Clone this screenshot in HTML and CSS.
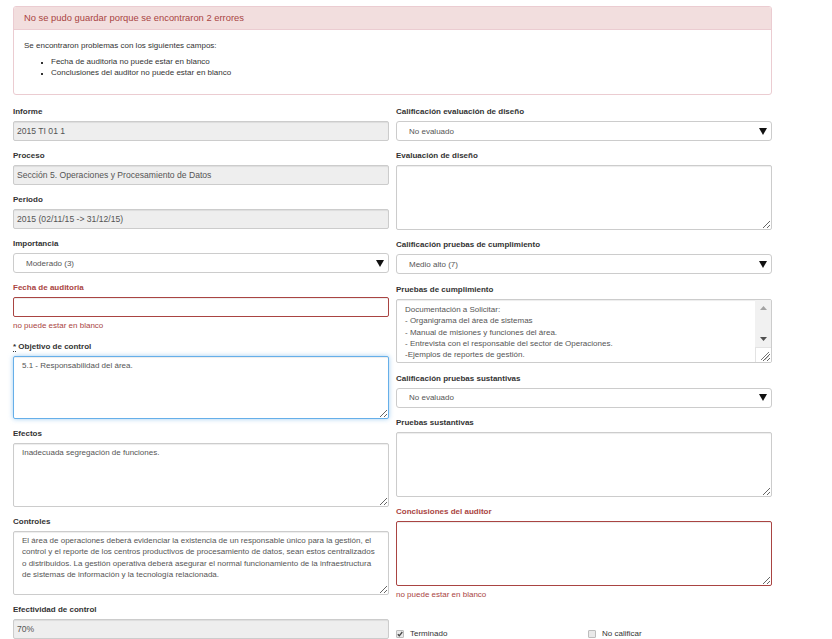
FILE: index.html
```html
<!DOCTYPE html>
<html lang="es">
<head>
<meta charset="utf-8">
<title>Prueba</title>
<link rel="stylesheet" href="styles.css">
</head>
<body>
<div class="page">
  <div class="alert">
    <div class="alert-head">No se pudo guardar porque se encontraron 2 errores</div>
    <div class="alert-body">
      <p>Se encontraron problemas con los siguientes campos:</p>
      <ul>
        <li>Fecha de auditoria no puede estar en blanco</li>
        <li>Conclusiones del auditor no puede estar en blanco</li>
      </ul>
    </div>
  </div>

  <div class="form">
    <div class="col col-l">
      <div class="group">
        <label class="lbl">Informe</label>
        <div class="input disabled">2015 TI 01 1</div>
      </div>
      <div class="group">
        <label class="lbl">Proceso</label>
        <div class="input disabled">Sección 5. Operaciones y Procesamiento de Datos</div>
      </div>
      <div class="group">
        <label class="lbl">Periodo</label>
        <div class="input disabled">2015 (02/11/15 -&gt; 31/12/15)</div>
      </div>
      <div class="group">
        <label class="lbl">Importancia</label>
        <div class="select"><span>Moderado (3)</span><svg class="caret" width="8" height="7" viewBox="0 0 8 7"><polygon points="0,0 8,0 4,7" fill="#111"/></svg></div>
      </div>
      <div class="group has-error">
        <label class="lbl">Fecha de auditoria</label>
        <div class="input"></div>
        <div class="help">no puede estar en blanco</div>
      </div>
      <div class="group">
        <label class="lbl"><abbr title="requerido">*</abbr> Objetivo de control</label>
        <textarea class="ta focus">5.1 - Responsabilidad del área.</textarea>
      </div>
      <div class="group">
        <label class="lbl">Efectos</label>
        <textarea class="ta">Inadecuada segregación de funciones.</textarea>
      </div>
      <div class="group">
        <label class="lbl">Controles</label>
        <textarea class="ta">El área de operaciones deberá evidenciar la existencia de un responsable único para la gestión, el
control y el reporte de los centros productivos de procesamiento de datos, sean estos centralizados
o distribuidos. La gestión operativa deberá asegurar el normal funcionamiento de la infraestructura
de sistemas de información y la tecnología relacionada.</textarea>
      </div>
      <div class="group">
        <label class="lbl">Efectividad de control</label>
        <div class="input disabled">70%</div>
      </div>
    </div>

    <div class="col col-r">
      <div class="group">
        <label class="lbl">Calificación evaluación de diseño</label>
        <div class="select"><span>No evaluado</span><svg class="caret" width="8" height="7" viewBox="0 0 8 7"><polygon points="0,0 8,0 4,7" fill="#111"/></svg></div>
      </div>
      <div class="group">
        <label class="lbl">Evaluación de diseño</label>
        <textarea class="ta"></textarea>
      </div>
      <div class="group">
        <label class="lbl">Calificación pruebas de cumplimiento</label>
        <div class="select"><span>Medio alto (7)</span><svg class="caret" width="8" height="7" viewBox="0 0 8 7"><polygon points="0,0 8,0 4,7" fill="#111"/></svg></div>
      </div>
      <div class="group">
        <label class="lbl">Pruebas de cumplimiento</label>
        <div class="ta scrollbox">
          <div class="ta-text">Documentación a Solicitar:<br>- Organigrama del área de sistemas<br>- Manual de misiones y funciones del área.<br>- Entrevista con el responsable del sector de Operaciones.<br>-Ejemplos de reportes de gestión.</div>
          <div class="sbar">
            <div class="sbtn"><svg width="7" height="4" viewBox="0 0 7 4"><polygon points="0,4 7,4 3.5,0" fill="#a3a3a3"/></svg></div>
            <div class="strack"></div>
            <div class="sbtn"><svg width="7" height="4" viewBox="0 0 7 4"><polygon points="0,0 7,0 3.5,4" fill="#505050"/></svg></div>
            <div class="scorner"><svg width="9" height="9" viewBox="0 0 9 9"><line x1="1" y1="9" x2="9" y2="1" stroke="#777" stroke-width="1"/><line x1="5" y1="9" x2="9" y2="5" stroke="#777" stroke-width="1"/></svg></div>
          </div>
        </div>
      </div>
      <div class="group">
        <label class="lbl">Calificación pruebas sustantivas</label>
        <div class="select"><span>No evaluado</span><svg class="caret" width="8" height="7" viewBox="0 0 8 7"><polygon points="0,0 8,0 4,7" fill="#111"/></svg></div>
      </div>
      <div class="group">
        <label class="lbl">Pruebas sustantivas</label>
        <textarea class="ta"></textarea>
      </div>
      <div class="group has-error">
        <label class="lbl">Conclusiones del auditor</label>
        <textarea class="ta"></textarea>
        <div class="help">no puede estar en blanco</div>
      </div>
      <div class="checks">
        <div class="check"><span class="box checked"><svg width="6" height="6" viewBox="0 0 6 6"><polyline points="0.8,3.2 2.3,4.8 5.3,1" fill="none" stroke="#444" stroke-width="1.3"/></svg></span><span>Terminado</span></div>
        <div class="check"><span class="box"></span><span>No calificar</span></div>
      </div>
    </div>
  </div>
</div>
</body>
</html>
```

FILE: styles.css
```css
html, body {
  margin: 0;
  padding: 0;
  background: #fff;
}
body {
  font-family: "Liberation Sans", Arial, Helvetica, sans-serif;
  color: #333;
  font-size: 8px;
}
.page {
  width: 759px;
  padding: 6px 0 0 13px;
}

/* alert */
.alert {
  border: 1px solid #ebccd1;
  border-radius: 3px;
  overflow: hidden;
}
.alert-head {
  height: 22px;
  line-height: 22px;
  padding: 0 10px;
  background: #f2dede;
  border-bottom: 1px solid #ebccd1;
  color: #a94442;
  font-size: 9.4px;
}
.alert-body {
  padding: 10px;
  font-size: 8px;
  color: #333;
}
.alert-body p {
  margin: 0 0 4px;
  line-height: 12px;
}
.alert-body ul {
  margin: 0 0 6px;
  padding-left: 27px;
  list-style-type: square;
}
.alert-body li {
  line-height: 11px;
}
.alert-body li::marker {
  font-size: 6px;
}

/* form */
.form {
  margin-top: 11px;
  display: grid;
  grid-template-columns: 376px 376px;
  column-gap: 7px;
  align-items: start;
}
.col {
  display: flex;
  flex-direction: column;
}
.group {
  display: flex;
  flex-direction: column;
  margin-bottom: 9px;
}
.col-r .group {
  margin-bottom: 9.4px;
}
.lbl {
  display: block;
  font-weight: bold;
  font-size: 8px;
  line-height: 12px;
  margin-bottom: 3px;
  color: #333;
}
.lbl abbr {
  text-decoration: none;
  border-bottom: 1px dotted #333;
  cursor: help;
}
.has-error .lbl {
  color: #a94442;
}
.help {
  margin-top: 3px;
  line-height: 12px;
  font-size: 8px;
  color: #a94442;
}

.input {
  box-sizing: border-box;
  height: 20px;
  line-height: 18px;
  padding: 0 3px;
  border: 1px solid #ccc;
  border-radius: 2px;
  background: #fff;
  color: #555;
  font-size: 8.6px;
  box-shadow: inset 0 1px 1px rgba(0, 0, 0, .075);
  white-space: nowrap;
  overflow: hidden;
}
.input.disabled {
  background: #eee;
}
.has-error .input,
.has-error .ta {
  border-color: #a94442;
}

.select {
  box-sizing: border-box;
  height: 20px;
  display: flex;
  align-items: center;
  justify-content: space-between;
  padding: 0 4px 0 12px;
  border: 1px solid #ccc;
  border-radius: 3px;
  background: #fff;
  color: #555;
  font-size: 8px;
}
.caret {
  display: block;
}

.ta {
  box-sizing: border-box;
  display: block;
  width: 100%;
  height: 64px;
  margin: 0;
  padding: 3px 8px;
  border: 1px solid #ccc;
  border-radius: 2px;
  background: #fff;
  color: #555;
  font-family: "Liberation Sans", Arial, Helvetica, sans-serif;
  font-size: 8px;
  line-height: 11.4px;
  box-shadow: inset 0 1px 1px rgba(0, 0, 0, .075);
  resize: vertical;
  overflow: hidden;
  outline: none;
}
.col-r .ta {
  height: 64.6px;
}
.ta.focus {
  height: 63px;
  border-color: #66afe9;
  box-shadow: inset 0 1px 1px rgba(0, 0, 0, .075), 0 0 5px rgba(102, 175, 233, .6);
}

.scrollbox {
  display: flex;
  padding: 0;
}
.ta-text {
  flex: 1;
  padding: 4px 8px 0;
  overflow: hidden;
}
.sbar {
  width: 16px;
  display: flex;
  flex-direction: column;
  background: #f1f1f1;
}
.sbtn {
  height: 16px;
  display: flex;
  align-items: center;
  justify-content: center;
}
.sbtn svg {
  display: block;
}
.strack {
  flex: 1;
}
.scorner {
  height: 15px;
  background: #fff;
  border-top: 1px solid #e3e3e3;
  border-left: 1px solid #e3e3e3;
  box-sizing: border-box;
  display: flex;
  align-items: flex-end;
  justify-content: flex-end;
  padding: 0 2px 2px 0;
}
.scorner svg {
  display: block;
}

/* checkboxes */
.checks {
  margin-top: 18px;
  display: grid;
  grid-template-columns: 192px auto;
}
.check {
  display: flex;
  align-items: center;
  line-height: 12px;
  font-size: 8px;
  color: #333;
}
.box {
  box-sizing: border-box;
  width: 8px;
  height: 8px;
  margin-right: 6px;
  border: 1px solid #bdbdbd;
  border-radius: 1px;
  background: #e9e9e9;
  display: flex;
  align-items: center;
  justify-content: center;
}
.box svg {
  display: block;
}
```
